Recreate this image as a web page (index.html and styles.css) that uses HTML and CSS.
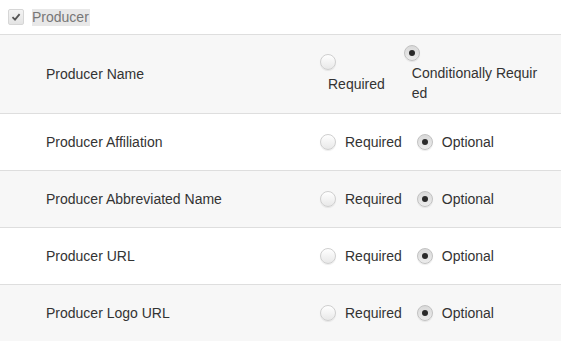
FILE: index.html
```html
<!DOCTYPE html>
<html lang="en">
<head>
    <meta charset="UTF-8">
    <meta name="viewport" content="width=device-width, initial-scale=1.0">
    <title>Producer Fields</title>
    <link rel="stylesheet" href="styles.css">
</head>
<body>
    <div class="group-header">
        <span class="checkbox">
            <svg width="10" height="10" viewBox="0 0 10 10"><path d="M1.5 5.2 L4 7.6 L8.6 2.2" fill="none" stroke="#555" stroke-width="1.8"/></svg>
        </span>
        <span class="group-title">Producer</span>
    </div>

    <div class="field-row tall">
        <div class="field-name">Producer Name</div>
        <div class="options stacked">
            <label class="opt opt-short"><span class="radio"></span><span class="opt-text">Required</span></label>
            <label class="opt opt-long"><span class="radio checked"></span><span class="opt-text">Conditionally Required</span></label>
        </div>
    </div>

    <div class="field-row">
        <div class="field-name">Producer Affiliation</div>
        <div class="options">
            <label class="opt"><span class="radio"></span><span class="opt-text">Required</span></label>
            <label class="opt"><span class="radio checked"></span><span class="opt-text">Optional</span></label>
        </div>
    </div>

    <div class="field-row">
        <div class="field-name">Producer Abbreviated Name</div>
        <div class="options">
            <label class="opt"><span class="radio"></span><span class="opt-text">Required</span></label>
            <label class="opt"><span class="radio checked"></span><span class="opt-text">Optional</span></label>
        </div>
    </div>

    <div class="field-row">
        <div class="field-name">Producer URL</div>
        <div class="options">
            <label class="opt"><span class="radio"></span><span class="opt-text">Required</span></label>
            <label class="opt"><span class="radio checked"></span><span class="opt-text">Optional</span></label>
        </div>
    </div>

    <div class="field-row">
        <div class="field-name">Producer Logo URL</div>
        <div class="options">
            <label class="opt"><span class="radio"></span><span class="opt-text">Required</span></label>
            <label class="opt"><span class="radio checked"></span><span class="opt-text">Optional</span></label>
        </div>
    </div>
</body>
</html>
```

FILE: styles.css
```css
body {
    font-family: "Liberation Sans", Arial, sans-serif;
    font-size: 14px;
    color: #333;
    background: #fff;
    margin: 0;
}

.group-header {
    display: flex;
    align-items: center;
    gap: 8px;
    height: 34px;
    padding-left: 8px;
    border-bottom: 1px solid #dedede;
}

.checkbox {
    width: 14px;
    height: 14px;
    border: 1px solid #d6d6d6;
    border-radius: 2px;
    background: linear-gradient(#f4f4f4, #e4e4e4);
    display: flex;
    align-items: center;
    justify-content: center;
}

.group-title {
    color: #777;
    background: #e8e8e8;
    line-height: 17px;
    padding-right: 1px;
}

.field-row {
    display: grid;
    grid-template-columns: 320px 1fr;
    align-items: center;
    height: 56px;
    border-bottom: 1px solid #dedede;
}

.field-row:nth-of-type(even) {
    background: #f7f7f7;
}

.field-row.tall {
    height: 78px;
}

.field-name {
    padding-left: 46px;
}

.options {
    display: flex;
    align-items: center;
    gap: 15px;
}

.opt {
    display: flex;
    align-items: center;
    gap: 9px;
    line-height: 20px;
}

.stacked {
    gap: 19px;
}

.stacked .opt {
    display: block;
}

.stacked .opt-text {
    display: block;
    padding-left: 8px;
}

.stacked .opt-short .radio {
    margin-bottom: 4px;
}

.stacked .opt-long {
    width: 137px;
    word-break: break-all;
}

.stacked .opt-long .radio {
    margin-bottom: 2px;
}

.radio {
    display: block;
    width: 14px;
    height: 14px;
    border: 1px solid #cfcfcf;
    border-radius: 50%;
    background: linear-gradient(#ffffff, #e8e8e8);
    box-shadow: 0 1px 1px rgba(0, 0, 0, 0.08);
    position: relative;
}

.radio.checked {
    background: linear-gradient(#d9d9d9, #ececec);
    border-color: #c2c2c2;
}

.radio.checked::after {
    content: "";
    position: absolute;
    left: 4px;
    top: 4px;
    width: 6px;
    height: 6px;
    border-radius: 50%;
    background: #2a2a2a;
}
```
